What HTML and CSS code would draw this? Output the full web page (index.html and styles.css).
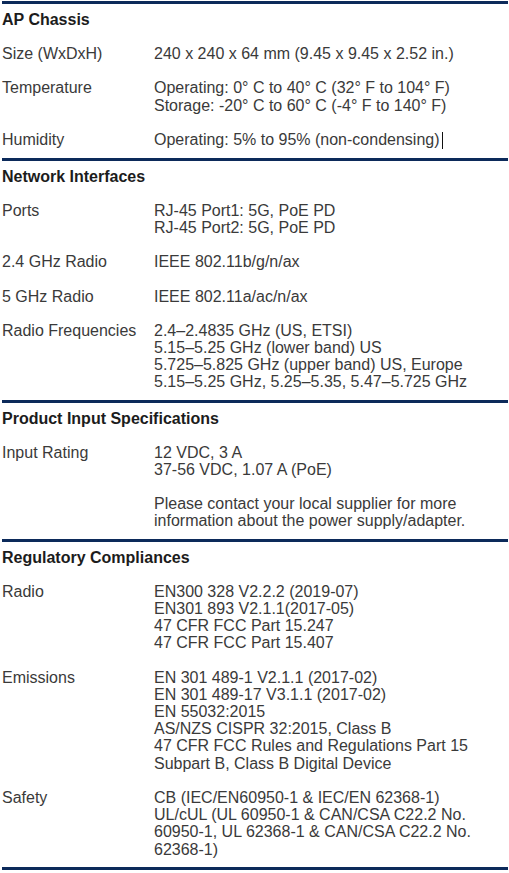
FILE: index.html
```html
<!DOCTYPE html>
<html lang="en">
<head>
<meta charset="utf-8">
<title>AP Specifications</title>
<link rel="stylesheet" href="styles.css">
</head>
<body>
<div class="spec">
  <section class="group">
    <h2 class="group-title">AP Chassis</h2>
    <div class="row"><div class="label">Size (WxDxH)</div><div class="value">240 x 240 x 64 mm (9.45 x 9.45 x 2.52 in.)</div></div>
    <div class="row"><div class="label">Temperature</div><div class="value">Operating: 0° C to 40° C (32° F to 104° F)<br>Storage: -20° C to 60° C (-4° F to 140° F)</div></div>
    <div class="row"><div class="label">Humidity</div><div class="value">Operating: 5% to 95% (non-condensing)<span class="caret"></span></div></div>
  </section>
  <section class="group">
    <h2 class="group-title">Network Interfaces</h2>
    <div class="row"><div class="label">Ports</div><div class="value">RJ-45 Port1: 5G, PoE PD<br>RJ-45 Port2: 5G, PoE PD</div></div>
    <div class="row"><div class="label">2.4 GHz Radio</div><div class="value">IEEE 802.11b/g/n/ax</div></div>
    <div class="row"><div class="label">5 GHz Radio</div><div class="value">IEEE 802.11a/ac/n/ax</div></div>
    <div class="row"><div class="label">Radio Frequencies</div><div class="value">2.4–2.4835 GHz (US, ETSI)<br>5.15–5.25 GHz (lower band) US<br>5.725–5.825 GHz (upper band) US, Europe<br>5.15–5.25 GHz, 5.25–5.35, 5.47–5.725 GHz</div></div>
  </section>
  <section class="group">
    <h2 class="group-title">Product Input Specifications</h2>
    <div class="row"><div class="label">Input Rating</div><div class="value stack"><p>12 VDC, 3 A<br>37-56 VDC, 1.07 A (PoE)</p><p>Please contact your local supplier for more<br>information about the power supply/adapter.</p></div></div>
  </section>
  <section class="group last">
    <h2 class="group-title">Regulatory Compliances</h2>
    <div class="row"><div class="label">Radio</div><div class="value">EN300 328 V2.2.2 (2019-07)<br>EN301 893 V2.1.1(2017-05)<br>47 CFR FCC Part 15.247<br>47 CFR FCC Part 15.407</div></div>
    <div class="row"><div class="label">Emissions</div><div class="value">EN 301 489-1 V2.1.1 (2017-02)<br>EN 301 489-17 V3.1.1 (2017-02)<br>EN 55032:2015<br>AS/NZS CISPR 32:2015, Class B<br>47 CFR FCC Rules and Regulations Part 15<br>Subpart B, Class B Digital Device</div></div>
    <div class="row"><div class="label">Safety</div><div class="value">CB (IEC/EN60950-1 &amp; IEC/EN 62368-1)<br>UL/cUL (UL 60950-1 &amp; CAN/CSA C22.2 No.<br>60950-1, UL 62368-1 &amp; CAN/CSA C22.2 No.<br>62368-1)</div></div>
  </section>
</div>
</body>
</html>
```
FILE: styles.css
```css
html, body {
  margin: 0;
  padding: 0;
  background: #ffffff;
}

body {
  font-family: "Liberation Sans", Arial, sans-serif;
  font-size: 16px;
  line-height: 17.2px;
  color: #3a3a3a;
}

.spec {
  padding: 1px 1px 0 2px;
}

.group {
  display: flex;
  flex-direction: column;
  gap: 17px;
  border-top: 3px solid #0c2a5a;
  padding: 7px 0 9px 0;
}

.group.last {
  border-bottom: 3px solid #0c2a5a;
}

.group-title {
  margin: 0;
  font-size: 16px;
  line-height: 17.2px;
  font-weight: bold;
  color: #1c1c1c;
}

.row {
  display: grid;
  grid-template-columns: 152px 1fr;
}

.label {
  white-space: nowrap;
}

.value {
  white-space: nowrap;
}

.stack {
  display: flex;
  flex-direction: column;
  gap: 17px;
}

.stack p {
  margin: 0;
}

.caret {
  display: inline-block;
  width: 0;
  height: 17px;
  border-left: 1px solid #111;
  margin-left: 2px;
  vertical-align: -4px;
}
```
